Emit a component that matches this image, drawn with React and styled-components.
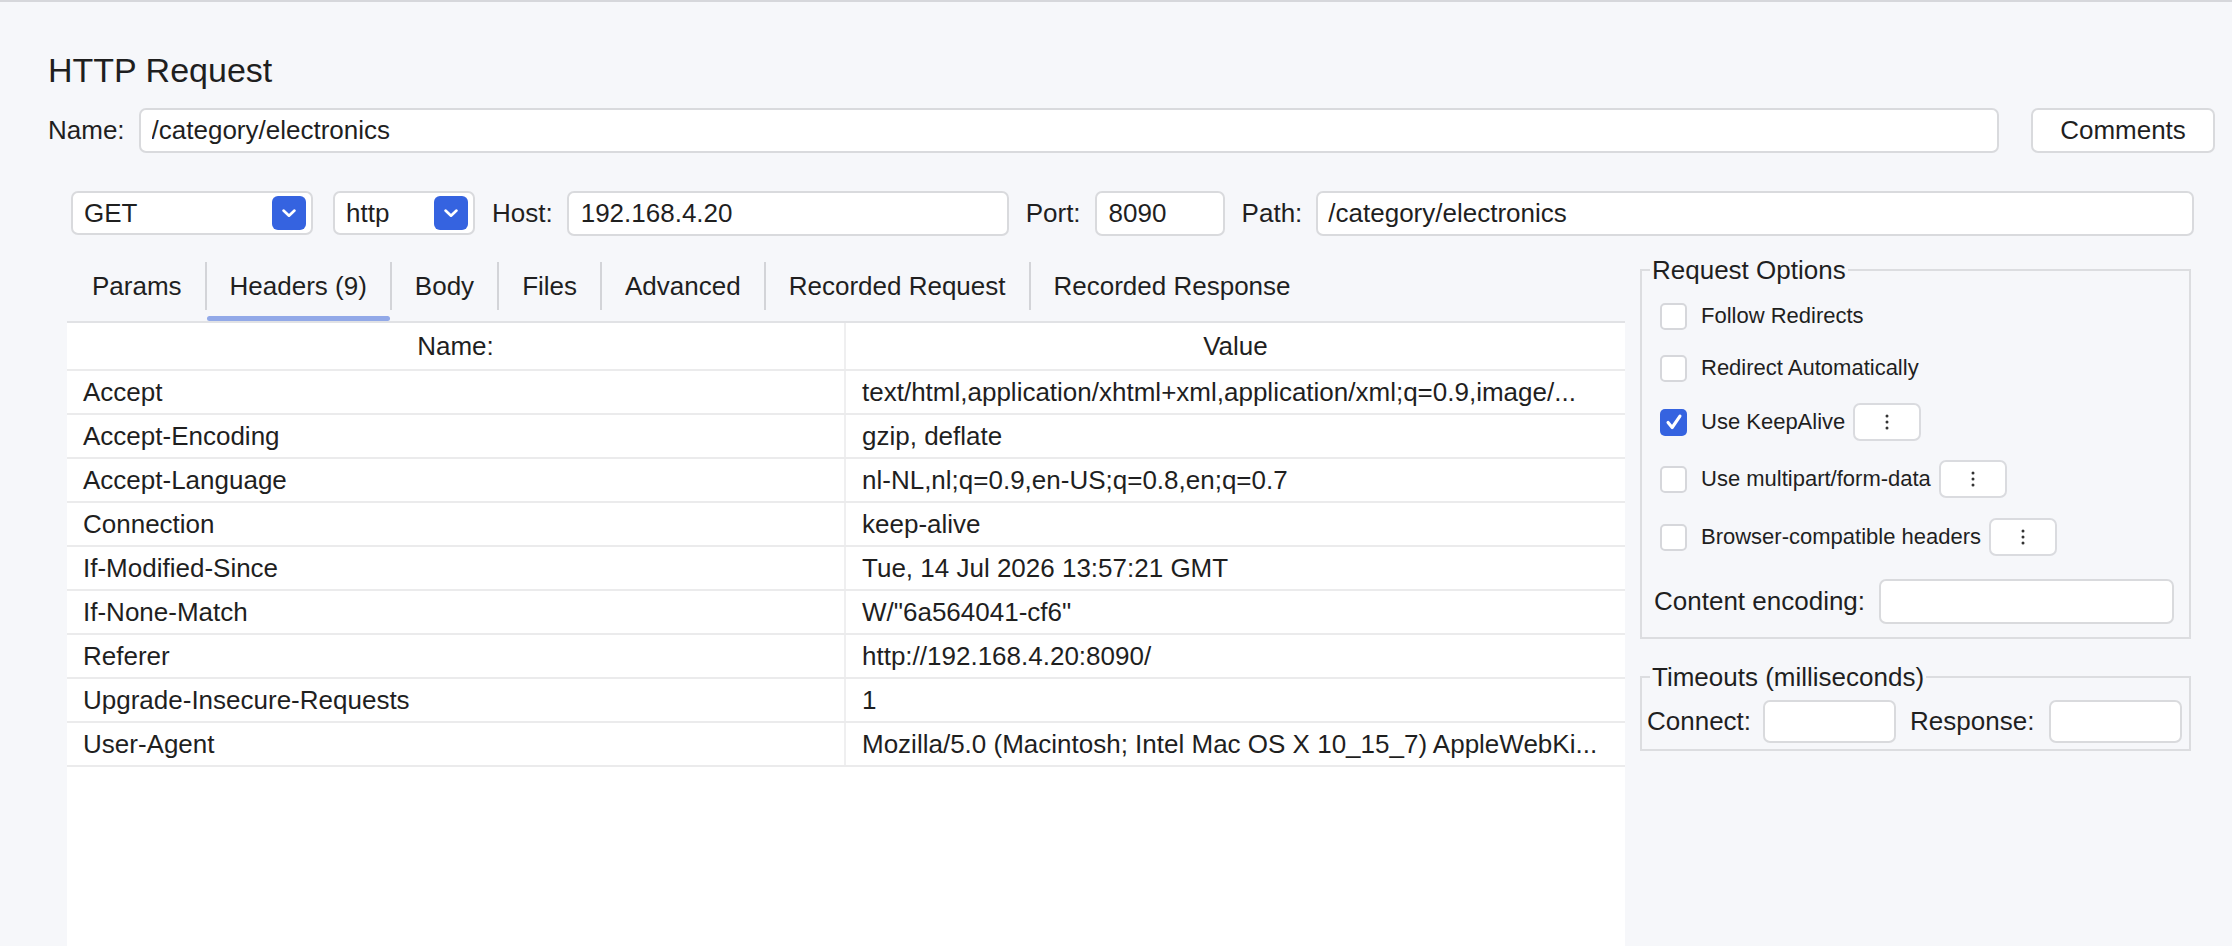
import React from "react";
import styled, { createGlobalStyle } from "styled-components";

const GlobalStyle = createGlobalStyle`
  html, body, #root {
    margin: 0;
    height: 100%;
    overflow: hidden;
  }
  body {
    background: #f6f7fa;
    color: #1f1f1f;
    font-family: "Liberation Sans", Arial, sans-serif;
  }
`;

const headers = [
  ["Accept", "text/html,application/xhtml+xml,application/xml;q=0.9,image/..."],
  ["Accept-Encoding", "gzip, deflate"],
  ["Accept-Language", "nl-NL,nl;q=0.9,en-US;q=0.8,en;q=0.7"],
  ["Connection", "keep-alive"],
  ["If-Modified-Since", "Tue, 14 Jul 2026 13:57:21 GMT"],
  ["If-None-Match", 'W/"6a564041-cf6"'],
  ["Referer", "http://192.168.4.20:8090/"],
  ["Upgrade-Insecure-Requests", "1"],
  ["User-Agent", "Mozilla/5.0 (Macintosh; Intel Mac OS X 10_15_7) AppleWebKi..."],
];

const tabs = ["Params", "Headers (9)", "Body", "Files", "Advanced", "Recorded Request", "Recorded Response"];

const options = [
  { label: "Follow Redirects", h: 52 },
  { label: "Redirect Automatically", h: 52 },
  { label: "Use KeepAlive", h: 56, checked: true, more: true },
  { label: "Use multipart/form-data", h: 58, more: true },
  { label: "Browser-compatible headers", h: 58, more: true },
];

const Chevron = () => (
  <svg width="22" height="22" viewBox="0 0 16 16" fill="none">
    <path d="M4 6.2 L8 10 L12 6.2" stroke="#fff" strokeWidth="1.9" strokeLinecap="round" strokeLinejoin="round" />
  </svg>
);

const Check = () => (
  <svg width="22" height="22" viewBox="0 0 24 24" fill="none">
    <path d="M5.5 12.5 L10 18 L18.5 5.5" stroke="#fff" strokeWidth="3.4" strokeLinecap="round" strokeLinejoin="round" />
  </svg>
);

const Dots = () => (
  <svg width="6" height="18" viewBox="0 0 6 18">
    <circle cx="3" cy="3" r="1.5" fill="#333" />
    <circle cx="3" cy="9" r="1.5" fill="#333" />
    <circle cx="3" cy="15" r="1.5" fill="#333" />
  </svg>
);

const App = () => {
  return (
    <Page>
      <GlobalStyle />
      <Title>HTTP Request</Title>

      <NameRow>
        <Label>Name:</Label>
        <Field $grow defaultValue="/category/electronics" readOnly />
        <CommentsButton>Comments</CommentsButton>
      </NameRow>

      <RequestRow>
        <Select $w={242}>
          <span>GET</span>
          <SelectArrow><Chevron /></SelectArrow>
        </Select>
        <Select $w={142} $ml={20}>
          <span>http</span>
          <SelectArrow><Chevron /></SelectArrow>
        </Select>
        <Label $ml={17}>Host:</Label>
        <Field $w={442} $pl={12} defaultValue="192.168.4.20" readOnly />
        <Label $ml={17}>Port:</Label>
        <Field $w={130} $pl={12} defaultValue="8090" readOnly />
        <Label $ml={17}>Path:</Label>
        <Field $grow $pl={10} defaultValue="/category/electronics" readOnly />
      </RequestRow>

      <Main>
        <LeftCol>
          <TabBar>
            {tabs.map((t, i) => (
              <Tab key={t}>
                <TabLabel $first={i === 0}>{t}</TabLabel>
                <TabMark $active={i === 1} />
              </Tab>
            ))}
          </TabBar>
          <Table>
            <HeadRow>
              <HeadCell $sep>Name:</HeadCell>
              <HeadCell>Value</HeadCell>
            </HeadRow>
            {headers.map(([k, v]) => (
              <Row key={k}>
                <Cell $sep>{k}</Cell>
                <Cell>{v}</Cell>
              </Row>
            ))}
          </Table>
        </LeftCol>

        <RightCol>
          <Group $pb={13}>
            <Legend>Request Options</Legend>
            {options.map((o) => (
              <CheckRow key={o.label} $h={o.h}>
                <Box $checked={o.checked}>{o.checked && <Check />}</Box>
                <CheckLabel>{o.label}</CheckLabel>
                {o.more && <MoreButton><Dots /></MoreButton>}
              </CheckRow>
            ))}
            <EncodingRow>
              <Label>Content encoding:</Label>
              <Field $grow $ml={14} defaultValue="" readOnly />
            </EncodingRow>
          </Group>

          <Group $mt={23} $pt={8} $pb={6}>
            <Legend>Timeouts (milliseconds)</Legend>
            <TimeoutRow>
              <Label>Connect:</Label>
              <Field $w={133} $ml={12} $h={43} defaultValue="" readOnly />
              <Label $ml={14}>Response:</Label>
              <Field $w={133} $ml={15} $h={43} defaultValue="" readOnly />
            </TimeoutRow>
          </Group>
        </RightCol>
      </Main>
    </Page>
  );
};

const Page = styled.div`
  height: 100vh;
  box-sizing: border-box;
  border-top: 2px solid #d6d7db;
  display: flex;
  flex-direction: column;
  font-size: 26px;
`;

const Title = styled.h1`
  margin: 48px 0 0 48px;
  font-size: 34px;
  line-height: 41px;
  font-weight: 400;
`;

const NameRow = styled.div`
  display: flex;
  align-items: center;
  height: 45px;
  margin-top: 17px;
  padding: 0 17px 0 48px;
`;

const Label = styled.span`
  font-size: 26px;
  white-space: nowrap;
  margin-left: ${(p) => p.$ml || 0}px;
  margin-right: 14px;
`;

const Field = styled.input`
  box-sizing: border-box;
  height: ${(p) => p.$h || 45}px;
  width: ${(p) => (p.$w ? `${p.$w}px` : "auto")};
  flex: ${(p) => (p.$grow ? "1 1 0" : "none")};
  min-width: 0;
  margin: 0 0 0 ${(p) => (p.$ml ? p.$ml - 14 : 0)}px;
  padding: 0 0 0 ${(p) => p.$pl || 11}px;
  border: 2px solid #d9dadd;
  border-radius: 7px;
  background: #fff;
  font: inherit;
  font-size: 26px;
  color: #1f1f1f;
  outline: none;
`;

const CommentsButton = styled.button`
  box-sizing: border-box;
  width: 184px;
  height: 45px;
  margin-left: 32px;
  border: 2px solid #d9dadd;
  border-radius: 7px;
  background: #fff;
  font: inherit;
  font-size: 26px;
  color: #1f1f1f;
  padding: 0;
`;

const RequestRow = styled.div`
  display: flex;
  align-items: center;
  height: 44px;
  margin-top: 38px;
  padding: 0 38px 0 71px;
`;

const Select = styled.div`
  box-sizing: border-box;
  width: ${(p) => p.$w}px;
  height: 44px;
  margin-left: ${(p) => p.$ml || 0}px;
  display: flex;
  align-items: center;
  justify-content: space-between;
  padding: 0 5px 0 11px;
  border: 2px solid #d9dadd;
  border-radius: 7px;
  background: #fff;
`;

const SelectArrow = styled.div`
  width: 34px;
  height: 34px;
  border-radius: 6px;
  background: #3563e0;
  display: flex;
  align-items: center;
  justify-content: center;
`;

const Main = styled.div`
  flex: 1;
  min-height: 0;
  display: flex;
  align-items: flex-start;
  gap: 15px;
  margin-top: 20px;
  padding: 0 41px 0 67px;
`;

const LeftCol = styled.div`
  flex: 1;
  align-self: stretch;
  display: flex;
  flex-direction: column;
  margin-top: 7px;
`;

const TabBar = styled.div`
  display: flex;
  height: 59px;
`;

const Tab = styled.div`
  display: flex;
  flex-direction: column;
`;

const TabLabel = styled.div`
  height: 48px;
  display: flex;
  align-items: center;
  padding: 0 23px;
  white-space: nowrap;
  border-left: 2px solid ${(p) => (p.$first ? "transparent" : "#d3d4d8")};
`;

const TabMark = styled.div`
  height: 5px;
  margin: 6px 0 0 2px;
  border-radius: 3px;
  background: ${(p) => (p.$active ? "#92a9e8" : "transparent")};
`;

const Table = styled.div`
  flex: 1;
  background: #fff;
  border-top: 2px solid #e1e2e5;
`;

const Row = styled.div`
  display: grid;
  grid-template-columns: 1fr 1fr;
  height: 44px;
  box-sizing: border-box;
  border-bottom: 2px solid #ebebec;
`;

const HeadRow = styled(Row)`
  height: 48px;
`;

const Cell = styled.div`
  display: flex;
  align-items: center;
  padding: 0 16px;
  min-width: 0;
  overflow: hidden;
  white-space: nowrap;
  border-right: ${(p) => (p.$sep ? "2px solid #efeff0" : "none")};
`;

const HeadCell = styled(Cell)`
  justify-content: center;
`;

const RightCol = styled.div`
  width: 551px;
  display: flex;
  flex-direction: column;
`;

const Group = styled.fieldset`
  margin: ${(p) => p.$mt || 0}px 0 0;
  padding: ${(p) => p.$pt || 5}px 0 ${(p) => p.$pb || 0}px;
  border: 2px solid #dcdde0;
  min-width: 0;
`;

const Legend = styled.legend`
  margin-left: 8px;
  padding: 0 2px;
  font-size: 26px;
  line-height: 30px;
`;

const CheckRow = styled.div`
  display: flex;
  align-items: center;
  height: ${(p) => p.$h}px;
  padding-left: 18px;
`;

const Box = styled.div`
  box-sizing: border-box;
  width: 27px;
  height: 27px;
  border-radius: 5px;
  border: ${(p) => (p.$checked ? "none" : "2px solid #d6d7db")};
  background: ${(p) => (p.$checked ? "#3563e0" : "#fff")};
  display: flex;
  align-items: center;
  justify-content: center;
`;

const CheckLabel = styled.span`
  font-size: 22px;
  margin-left: 14px;
  white-space: nowrap;
`;

const MoreButton = styled.div`
  box-sizing: border-box;
  width: 68px;
  height: 38px;
  margin-left: 8px;
  border: 2px solid #dadbdf;
  border-radius: 7px;
  background: #fff;
  display: flex;
  align-items: center;
  justify-content: center;
`;

const EncodingRow = styled.div`
  display: flex;
  align-items: center;
  margin-top: 13px;
  padding: 0 15px 0 12px;
`;

const TimeoutRow = styled.div`
  display: flex;
  align-items: center;
  padding-left: 5px;
`;

export default App;
